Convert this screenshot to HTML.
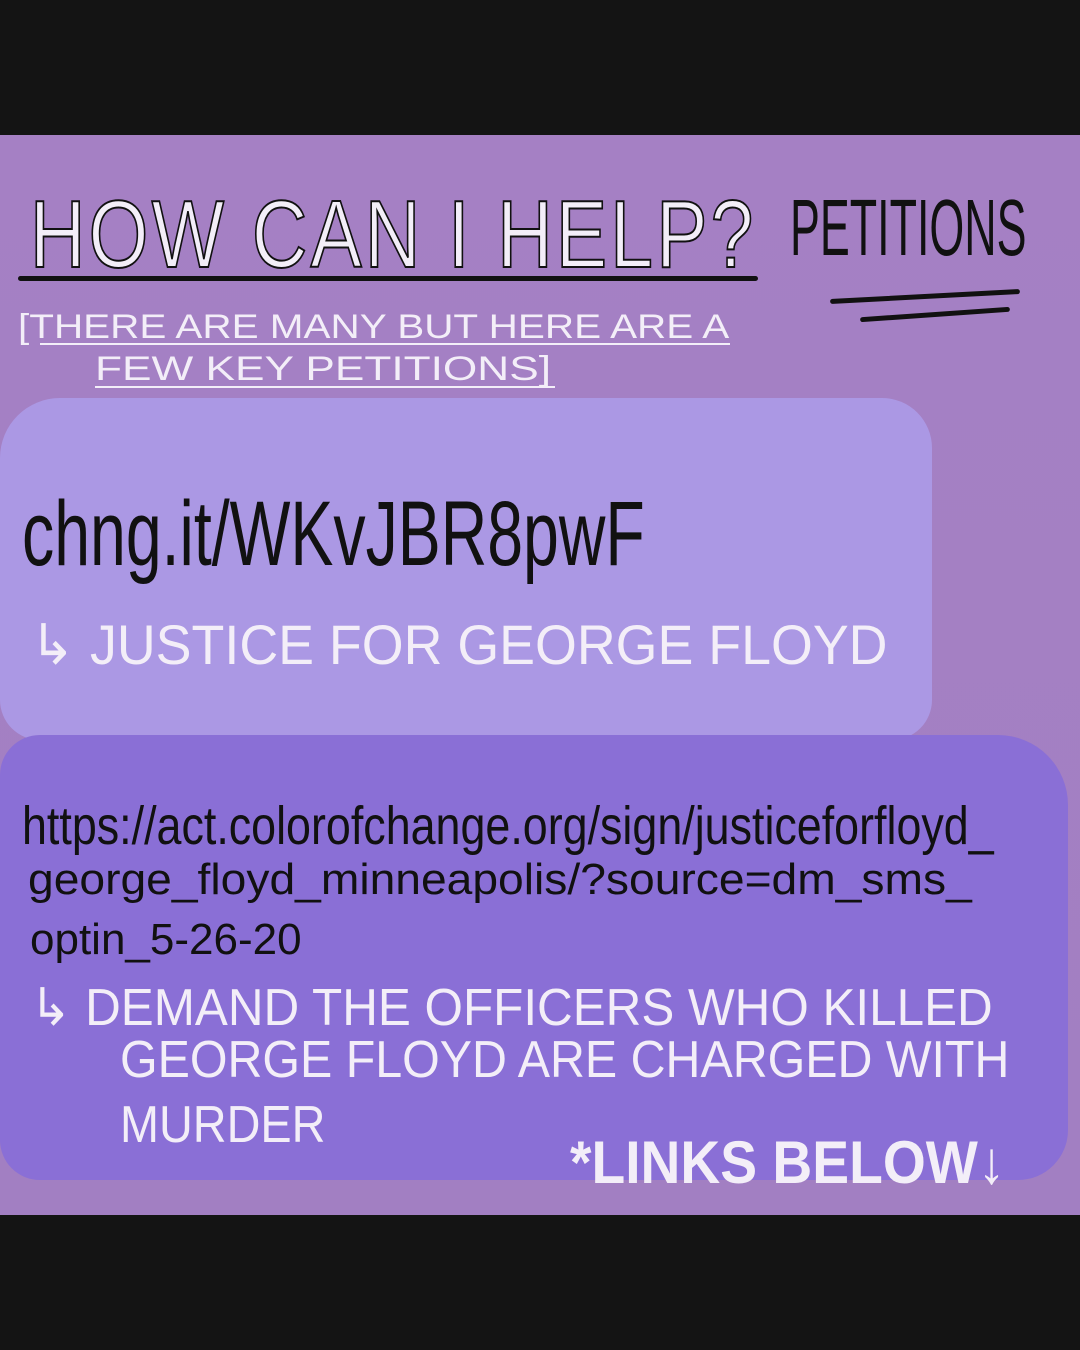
<!DOCTYPE html>
<html><head><style>
body{margin:0;width:1080px;height:1350px;background:#141414;position:relative;overflow:hidden;font-family:"Liberation Sans",sans-serif}
.bg{position:absolute;left:0;top:135px;width:1080px;height:1080px;background:linear-gradient(#a580c4,#a27fc2)}
.t{position:absolute;white-space:nowrap;transform-origin:0 0}
.w{color:#f3eef8}.k{color:#111}
.b1{position:absolute;left:0;top:398px;width:932px;height:342px;background:#ab98e4;border-radius:60px 50px 40px 40px}
.b2{position:absolute;left:0;top:735px;width:1068px;height:445px;background:#8a6fd6;border-radius:40px 70px 50px 40px}
.ln{position:absolute;background:#111;height:5px;border-radius:3px}
.wl{position:absolute;background:#f3eef8;height:2px}
</style></head><body>
<div class="bg"></div>
<div class="t w" style="left:30px;top:180px;font-size:96px;transform:scaleX(.8);-webkit-text-stroke:2px #111;letter-spacing:4px">HOW CAN I HELP?</div>
<div class="ln" style="left:18px;top:276px;width:740px"></div>
<div class="t k" style="left:790px;top:182px;font-size:80px;transform:scaleX(.56)">PETITIONS</div>
<div class="ln" style="left:830px;top:294px;width:190px;transform:rotate(-3deg)"></div>
<div class="ln" style="left:860px;top:312px;width:150px;transform:rotate(-4deg)"></div>
<div class="t w" style="left:18px;top:308px;font-size:34px;transform:scaleX(1.19)">[THERE ARE MANY BUT HERE ARE A</div>
<div class="wl" style="left:40px;top:343px;width:690px"></div>
<div class="t w" style="left:95px;top:350px;font-size:34px;transform:scaleX(1.3)">FEW KEY PETITIONS]</div>
<div class="wl" style="left:95px;top:386px;width:460px"></div>
<div class="b1"></div>
<div class="t k" style="left:22px;top:482px;font-size:92px;transform:scaleX(.7)">chng.it/WKvJBR8pwF</div>
<div class="t w" style="left:30px;top:612px;font-size:56px;transform:scaleX(.96)">↳ JUSTICE FOR GEORGE FLOYD</div>
<div class="b2"></div>
<div class="t k" style="left:22px;top:795px;font-size:54px;transform:scaleX(.83)">https://act.colorofchange.org/sign/justiceforfloyd_</div>
<div class="t k" style="left:28px;top:855px;font-size:44px;transform:scaleX(1.05)">george_floyd_minneapolis/?source=dm_sms_</div>
<div class="t k" style="left:30px;top:915px;font-size:44px">optin_5-26-20</div>
<div class="t w" style="left:30px;top:978px;font-size:52px;transform:scaleX(.95)">↳ DEMAND THE OFFICERS WHO KILLED</div>
<div class="t w" style="left:120px;top:1030px;font-size:52px;transform:scaleX(.93)">GEORGE FLOYD ARE CHARGED WITH</div>
<div class="t w" style="left:120px;top:1095px;font-size:52px;transform:scaleX(.9)">MURDER</div>
<div class="t w" style="left:570px;top:1128px;font-size:60px;font-weight:bold;transform:scaleX(.92)">*LINKS BELOW↓</div>
</body></html>
